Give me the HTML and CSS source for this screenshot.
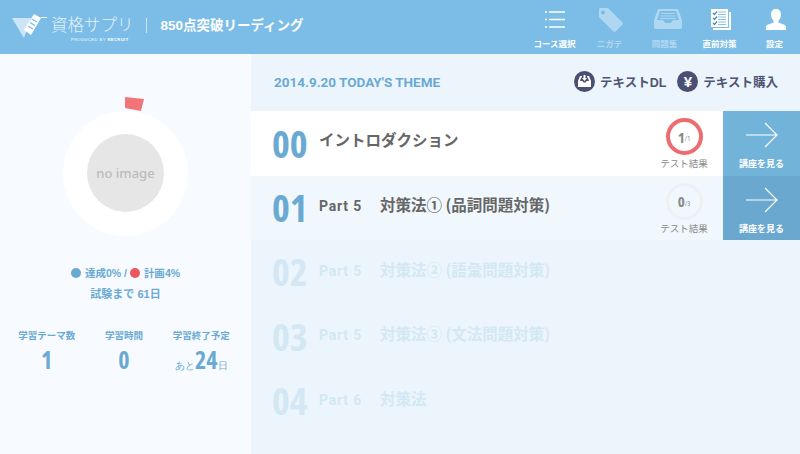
FILE: index.html
```html
<!DOCTYPE html>
<html lang="ja">
    <head>
        <meta charset="UTF-8">
        <title>資格サプリ</title>
        <link rel="stylesheet" href="styles.css">
    </head>
    <body>
        <header class="topbar">
            <div class="brand">
                <svg class="logo-mark" width="40" height="30" viewBox="0 0 40 30">
                    <path d="M1 8H20L13 28Z" fill="#cde6f7"/>
                    <path d="M23 4L30 8L20 25L13 20Z" fill="#fff"/>
                    <path d="M21 9l5 3M19 12.500l5 3M17 16l5 3" stroke="#7cbde8" stroke-width="1.300"/>
                    <path d="M30 7.500H36" stroke="#fff" stroke-width="1"/>
                </svg>
                <div class="wordmark">
                    <div class="service-name">資格サプリ</div>
                    <div class="produced">PRODUCED BY <b>RECRUIT</b></div>
                </div>
                <span class="divider"></span>
                <div class="course-title">850点突破リーディング</div>
            </div>
            <nav class="nav">
                <a class="nav-item">
                    <svg width="34" height="26" viewBox="0 0 34 26"><path d="M7 5h2M11 5h16M7 12.500h2M11 12.500h16M7 20h2M11 20h16" stroke="#fff" stroke-width="1.400" fill="none"/></svg>
                    <span>コース選択</span>
                </a>
                <a class="nav-item dim">
                    <svg width="34" height="26" viewBox="0 0 34 26"><path fill-rule="evenodd" d="M7 1h8l14 14a2 2 0 0 1 0 3l-6 6a2 2 0 0 1-3 0L6 10V2ZM10 3.500a2 2 0 1 0 .01 0Z" fill="#fff"/></svg>
                    <span>ニガテ</span>
                </a>
                <a class="nav-item dim">
                    <svg width="34" height="26" viewBox="0 0 34 26"><path fill-rule="evenodd" d="M10 2h20l4 11v7a2 2 0 0 1-2 2H8a2 2 0 0 1-2-2v-7ZM12 4l-3 9h6l2 3h6l2-3h6L28 4Z" fill="#fff"/><path d="M13 6.500h14M12.500 9h15M12 11.500h16" stroke="#fff" stroke-width="1.200"/></svg>
                    <span>問題集</span>
                </a>
                <a class="nav-item">
                    <svg width="34" height="26" viewBox="0 0 34 26"><rect x="10" y="5" width="18" height="18" fill="#fff"/><rect x="7.500" y="1.500" width="18" height="19" fill="#fff" stroke="#7cbde8"/><path d="M10 6l1.500 1.500L14 4.500M10 11l1.500 1.500L14 9.500M10 16l1.500 1.500L14 14.500" stroke="#4d88b5" stroke-width="1.200" fill="none"/><path d="M15 5h8M15 7.500h8M15 10h8M15 12.500h8M15 15h8M15 17.500h8" stroke="#8fc0e2" stroke-width="1"/></svg>
                    <span>直前対策</span>
                </a>
                <a class="nav-item">
                    <svg width="34" height="26" viewBox="0 0 34 26"><path d="M18 2c3 0 5 2 5 5.500 0 2.500-1 4.500-2.500 6v2c3 1.500 6.500 1.500 7.500 4v3.500H8V19.500c1-2.500 4.500-2.500 7.500-4v-2C14 12 13 10 13 7.500 13 4 15 2 18 2Z" fill="#fff"/></svg>
                    <span>設定</span>
                </a>
            </nav>
        </header>

        <div class="main">
            <aside class="sidebar">
                <div class="chart">
                    <span class="plan-mark"></span>
                    <div class="ring"><div class="no-image">no image</div></div>
                </div>
                <p class="legend"><i class="dot blue"></i>達成<em>0%</em> / <i class="dot red"></i>計画<em>4%</em></p>
                <p class="exam">試験まで <em>61</em>日</p>
                <div class="stats">
                    <div class="stat"><h4>学習テーマ数</h4><div class="num">1</div></div>
                    <div class="stat"><h4>学習時間</h4><div class="num">0</div></div>
                    <div class="stat"><h4>学習終了予定</h4><div class="num"><small>あと</small>24<small>日</small></div></div>
                </div>
            </aside>

            <section class="content">
                <div class="theme-bar">
                    <div class="theme-date">2014.9.20 TODAY'S THEME</div>
                    <div class="actions">
                        <a class="action">
                            <span class="action-icon"><svg width="15" height="15" viewBox="0 0 15 15"><path fill-rule="evenodd" d="M1 7l2-5h2v1.500H4.200L3 7h2.500l1 1.500h2L9.500 7H12l-1.200-3.500H10V2h2l2 5v6H1Z" fill="#fff"/><path d="M6.500 1h2v3H10L7.500 7 5 4h1.500Z" fill="#fff"/></svg></span>
                            テキストDL
                        </a>
                        <a class="action">
                            <span class="action-icon yen">¥</span>
                            テキスト購入
                        </a>
                    </div>
                </div>

                <div class="lesson current">
                    <div class="lesson-no">00</div>
                    <div class="lesson-title">イントロダクション</div>
                    <div class="result">
                        <div class="score done"><b>1</b><small>/1</small></div>
                        <span>テスト結果</span>
                    </div>
                    <a class="go">
                        <svg width="32" height="26" viewBox="0 0 32 26"><path d="M0 13h31M19 1l12 12-12 12" fill="none" stroke="#fff" stroke-width="1.200"/></svg>
                        <span>講座を見る</span>
                    </a>
                </div>
                <div class="lesson open">
                    <div class="lesson-no">01</div>
                    <div class="lesson-title"><span class="part">Part 5</span>対策法① (品詞問題対策)</div>
                    <div class="result">
                        <div class="score"><b>0</b><small>/3</small></div>
                        <span>テスト結果</span>
                    </div>
                    <a class="go dark">
                        <svg width="32" height="26" viewBox="0 0 32 26"><path d="M0 13h31M19 1l12 12-12 12" fill="none" stroke="#fff" stroke-width="1.200"/></svg>
                        <span>講座を見る</span>
                    </a>
                </div>
                <div class="lesson locked">
                    <div class="lesson-no">02</div>
                    <div class="lesson-title"><span class="part">Part 5</span>対策法② (語彙問題対策)</div>
                </div>
                <div class="lesson locked">
                    <div class="lesson-no">03</div>
                    <div class="lesson-title"><span class="part">Part 5</span>対策法③ (文法問題対策)</div>
                </div>
                <div class="lesson locked">
                    <div class="lesson-no">04</div>
                    <div class="lesson-title"><span class="part">Part 6</span>対策法</div>
                </div>
            </section>
        </div>
    </body>
</html>
```

FILE: styles.css
```css
* {
    box-sizing: border-box;
}
html, body {
    height: 100%;
}
body {
    margin: 0;
    font-family: "Liberation Sans", "Noto Sans CJK JP", sans-serif;
    background-color: #ecf5fc;
    overflow: hidden;
}
em {
    font-style: normal;
}

/* header */
.topbar {
    height: 54px;
    background-color: #7cbde8;
    display: flex;
    justify-content: space-between;
    color: #fff;
}
.brand {
    display: flex;
    align-items: center;
    padding-left: 11px;
}
.logo-mark {
    margin-top: -4px;
}
.wordmark {
    margin-top: 3px;
}
.service-name {
    font-size: 16.500px;
    line-height: 22px;
    font-weight: 300;
    color: #e3f1fa;
}
.produced {
    font-size: 4px;
    line-height: 6px;
    margin-left: 20px;
    margin-top: 1px;
    letter-spacing: .5px;
    white-space: nowrap;
}
.divider {
    width: 1px;
    height: 15px;
    margin: -4px 14px 0 12px;
    background-color: #cfe6f6;
}
.course-title {
    font-size: 13.500px;
    font-weight: bold;
    margin-top: -6px;
    white-space: nowrap;
}
.nav {
    display: flex;
    margin-right: -2px;
}
.nav-item {
    width: 55px;
    padding-top: 7px;
    display: flex;
    flex-direction: column;
    align-items: center;
    font-size: 8.500px;
    font-weight: bold;
    white-space: nowrap;
}
.nav-item span {
    margin-top: 6px;
    line-height: 10px;
}
.nav-item.dim {
    opacity: .4;
}

/* left column */
.main {
    display: flex;
    height: 400px;
}
.sidebar {
    width: 251px;
    background-color: #f7fbff;
    text-align: center;
    color: #6aaad2;
    font-weight: bold;
    flex-shrink: 0;
}
.chart {
    position: relative;
    padding-top: 57px;
    height: 212px;
}
.plan-mark {
    position: absolute;
    left: 125px;
    top: 43px;
    width: 19px;
    height: 14px;
    background-color: #f07478;
    clip-path: polygon(0 0, 19px 2px, 16px 14px, 0 11px);
}
.ring {
    width: 125px;
    height: 125px;
    margin: 0 auto;
    padding: 23px 24px;
    border-radius: 50%;
    background-color: #fff;
}
.no-image {
    width: 77px;
    height: 78px;
    border-radius: 50%;
    background-color: #e6e6e6;
    color: #bcbcbc;
    font-size: 13px;
    font-weight: 500;
    line-height: 78px;
    font-family: "Noto Sans", sans-serif;
}
.legend, .exam {
    margin: 0;
    font-size: 10.500px;
    line-height: 14px;
}
.exam {
    margin-top: 7px;
    font-size: 11px;
}
.dot {
    display: inline-block;
    width: 10px;
    height: 10px;
    border-radius: 50%;
    vertical-align: -1px;
    margin-right: 4px;
}
.dot.blue { background-color: #6aaad2; }
.dot.red { background-color: #e9585f; }
.stats {
    display: flex;
    margin-top: 29px;
    padding: 0 11px 0 8px;
}
.stat {
    width: 78px;
}
.stat h4 {
    margin: 0;
    font-size: 9.500px;
    line-height: 12px;
    white-space: nowrap;
}
.num {
    font-family: "Open Sans", sans-serif;
    font-size: 24px;
    line-height: 30px;
    margin-top: 3px;
    font-stretch: condensed;
}
.num small {
    font-size: 9.500px;
    font-weight: normal;
}

/* right column */
.content {
    flex: 1;
}
.theme-bar {
    height: 57px;
    display: flex;
    justify-content: space-between;
    align-items: center;
    padding: 0 22px 2px 23px;
}
.theme-date {
    font-family: Roboto, sans-serif;
    color: #6aaad2;
    font-size: 13.500px;
    font-weight: bold;
}
.actions {
    display: flex;
    gap: 11px;
}
.action {
    display: flex;
    align-items: center;
    gap: 5px;
    font-size: 12.500px;
    font-weight: bold;
    color: #4f5474;
}
.action-icon {
    width: 21px;
    height: 21px;
    border-radius: 50%;
    background-color: #4a4f73;
    display: flex;
    align-items: center;
    justify-content: center;
}
.action-icon.yen {
    color: #fff;
    font-size: 15px;
}
.lesson {
    height: 65px;
    display: flex;
    align-items: center;
    padding-left: 21px;
}
.lesson.current {
    background-color: #fff;
}
.lesson.open {
    background-color: #f1f8fd;
    height: 64px;
}
.lesson-no {
    width: 47px;
    font-family: "Open Sans", sans-serif;
    font-stretch: condensed;
    font-size: 38px;
    line-height: 44px;
    font-weight: bold;
    color: #6aaad2;
    margin-top: -2px;
}
.lesson-title {
    flex: 1;
    font-family: "Noto Sans CJK JP", sans-serif;
    color: #666;
    font-size: 15.500px;
    font-weight: bold;
    line-height: 22px;
    margin-top: -9px;
}
.open .lesson-title {
    margin-top: -7px;
}
.part {
    font-family: Roboto, sans-serif;
    font-size: 14px;
    letter-spacing: .8px;
    margin-right: 18px;
}
.locked {
    height: 64.500px;
}
.locked .lesson-no {
    color: #d3e8f4;
}
.locked .lesson-title {
    color: #d3e8f4;
    margin-top: -5px;
}
.result {
    width: 70px;
    margin-right: 4px;
    display: flex;
    flex-direction: column;
    align-items: center;
    color: #888;
    font-size: 9.500px;
    padding-top: 1px;
}
.result span {
    margin-top: 3px;
    line-height: 12px;
    white-space: nowrap;
}
.score {
    width: 37px;
    height: 37px;
    border-radius: 50%;
    border: 3px solid #eef0f1;
    display: flex;
    align-items: center;
    justify-content: center;
    color: #8a8a8a;
    font-family: "Open Sans", sans-serif;
    font-stretch: condensed;
    font-size: 15px;
}
.score small {
    font-size: 7px;
    margin-top: 4px;
}
.score.done {
    border-color: #ec6d70;
    border-width: 4px;
}
.go {
    width: 77px;
    height: 100%;
    background-color: #72b3da;
    color: #fff;
    font-size: 9px;
    font-weight: bold;
    display: flex;
    flex-direction: column;
    align-items: center;
    padding-top: 11px;
}
.go.dark {
    background-color: #6ba8cf;
}
.go span {
    margin-top: 11px;
    line-height: 10px;
}
```
